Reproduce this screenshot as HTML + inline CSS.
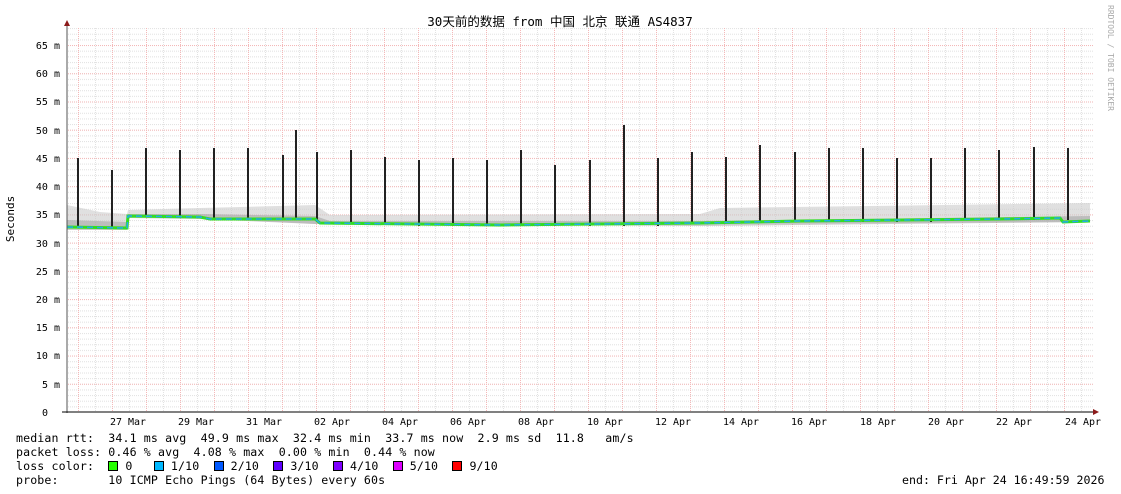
<!DOCTYPE html>
<html><head><meta charset="utf-8"><style>
body{margin:0;background:#fff;width:1121px;height:494px;overflow:hidden;position:relative;font-family:"DejaVu Sans Mono","Liberation Mono",monospace;}
pre{position:absolute;left:16px;top:431px;margin:0;font-family:"DejaVu Sans Mono","Liberation Mono",monospace;font-size:11.6px;line-height:14px;color:#000;letter-spacing:0.12px;}
.sq{display:inline-block;width:8px;height:8px;border:1px solid #000;vertical-align:-1px;}
</style></head><body>
<svg width="1121" height="494" style="position:absolute;left:0;top:0" font-family="DejaVu Sans Mono, Liberation Mono, monospace">
<defs>
<pattern id="hmin" x="0" y="412" width="10" height="5.646" patternUnits="userSpaceOnUse"><line x1="0" y1="0.5" x2="10" y2="0.5" stroke="#e2e2e2" stroke-width="1" stroke-dasharray="1,1"/></pattern>
<pattern id="hmaj" x="0" y="412" width="10" height="28.23" patternUnits="userSpaceOnUse"><line x1="0" y1="0.5" x2="10" y2="0.5" stroke="#f4b8b8" stroke-width="1" stroke-dasharray="1,1"/></pattern>
<pattern id="vmin" x="95" y="0" width="17" height="10" patternUnits="userSpaceOnUse"><line x1="0.5" y1="0" x2="0.5" y2="10" stroke="#e2e2e2" stroke-width="1" stroke-dasharray="1,1"/></pattern>
<pattern id="vmaj" x="78" y="0" width="34" height="10" patternUnits="userSpaceOnUse"><line x1="0.5" y1="0" x2="0.5" y2="10" stroke="#f4b8b8" stroke-width="1" stroke-dasharray="1,1"/></pattern>
</defs>
<rect x="67" y="27" width="1026" height="385" fill="url(#hmin)"/>
<rect x="67" y="27" width="1026" height="385" fill="url(#vmin)"/>
<rect x="67" y="27" width="1026" height="385" fill="url(#hmaj)"/>
<rect x="67" y="27" width="1026" height="385" fill="url(#vmaj)"/>
<g fill="#ccc" opacity="0.6">
<polygon points="67,205 100,212 127,214 128,210 200,208 315,205 330,215 700,214 720,208 1090,203 1090,222 700,224 315,224 200,218 128,217 127,228 67,228"/>
</g>
<g fill="#999" opacity="0.5">
<polygon points="67,220 127,222 128,214 200,214 315,216 330,221 700,221 1090,216 1090,222 700,226 315,224 200,219 128,218 127,230 67,230"/>
</g>
<g stroke="#222" stroke-width="2">
<line x1="78" y1="158" x2="78" y2="228"/><line x1="112" y1="170" x2="112" y2="229"/>
<line x1="146" y1="148" x2="146" y2="216"/><line x1="180" y1="150" x2="180" y2="216"/>
<line x1="214" y1="148" x2="214" y2="218"/><line x1="248" y1="148" x2="248" y2="220"/>
<line x1="283" y1="155" x2="283" y2="220"/><line x1="296" y1="130" x2="296" y2="220"/>
<line x1="317" y1="152" x2="317" y2="222"/><line x1="351" y1="150" x2="351" y2="224"/>
<line x1="385" y1="157" x2="385" y2="225"/><line x1="419" y1="160" x2="419" y2="226"/>
<line x1="453" y1="158" x2="453" y2="226"/><line x1="487" y1="160" x2="487" y2="226"/>
<line x1="521" y1="150" x2="521" y2="226"/><line x1="555" y1="165" x2="555" y2="226"/>
<line x1="590" y1="160" x2="590" y2="226"/><line x1="624" y1="125" x2="624" y2="226"/>
<line x1="658" y1="158" x2="658" y2="226"/><line x1="692" y1="152" x2="692" y2="224"/>
<line x1="726" y1="157" x2="726" y2="222"/><line x1="760" y1="145" x2="760" y2="222"/>
<line x1="795" y1="152" x2="795" y2="222"/><line x1="829" y1="148" x2="829" y2="222"/>
<line x1="863" y1="148" x2="863" y2="222"/><line x1="897" y1="158" x2="897" y2="222"/>
<line x1="931" y1="158" x2="931" y2="222"/><line x1="965" y1="148" x2="965" y2="220"/>
<line x1="999" y1="150" x2="999" y2="220"/><line x1="1034" y1="147" x2="1034" y2="220"/>
<line x1="1068" y1="148" x2="1068" y2="220"/>
</g>
<polyline fill="none" stroke="#33dd22" stroke-width="3" points="67,227 127,228 128,216 200,217 210,219 315,219 320,223 500,225 700,223 800,221 1000,219 1060,218 1063,222 1090,221"/>
<polyline fill="none" stroke="#22aaee" stroke-width="1.5" stroke-dasharray="6,4" points="67,227 127,228 128,216 200,217 210,219 315,219 320,223 500,225 700,223 800,221 1000,219 1060,218 1063,222 1090,221"/>
<line x1="67" y1="22" x2="67" y2="413" stroke="#555"/>
<line x1="62" y1="412" x2="1095" y2="412" stroke="#000"/>
<polygon points="64,26 70,26 67,20" fill="#8b1a1a"/>
<polygon points="1093,409 1093,415 1099,412" fill="#8b1a1a"/>
<g font-size="10" fill="#000" text-anchor="end">
<text x="60" y="49">65 m</text><text x="60" y="77">60 m</text><text x="60" y="105">55 m</text>
<text x="60" y="134">50 m</text><text x="60" y="162">45 m</text><text x="60" y="190">40 m</text>
<text x="60" y="218">35 m</text><text x="60" y="247">30 m</text><text x="60" y="275">25 m</text>
<text x="60" y="303">20 m</text><text x="60" y="331">15 m</text><text x="60" y="359">10 m</text>
<text x="60" y="388">5 m</text><text x="48" y="416">0</text>
</g>
<g font-size="10" fill="#000" text-anchor="middle">
<text x="128" y="425">27 Mar</text><text x="196" y="425">29 Mar</text><text x="264" y="425">31 Mar</text>
<text x="332" y="425">02 Apr</text><text x="400" y="425">04 Apr</text><text x="468" y="425">06 Apr</text>
<text x="536" y="425">08 Apr</text><text x="605" y="425">10 Apr</text><text x="673" y="425">12 Apr</text>
<text x="741" y="425">14 Apr</text><text x="809" y="425">16 Apr</text><text x="878" y="425">18 Apr</text>
<text x="946" y="425">20 Apr</text><text x="1014" y="425">22 Apr</text><text x="1083" y="425">24 Apr</text>
</g>
<text x="560" y="26" font-size="12.5" text-anchor="middle" font-family="DejaVu Sans Mono, Noto Sans CJK SC, monospace">30天前的数据 from 中国 北京 联通 AS4837</text>
<text transform="translate(14,219) rotate(-90)" font-size="11" text-anchor="middle">Seconds</text>
<text transform="translate(1108,5) rotate(90)" font-size="8" fill="#aaa">RRDTOOL / TOBI OETIKER</text>
</svg>
<pre>median rtt:  34.1 ms avg  49.9 ms max  32.4 ms min  33.7 ms now  2.9 ms sd  11.8   am/s
packet loss: 0.46 % avg  4.08 % max  0.00 % min  0.44 % now
loss color:  <span class="sq" style="background:#26ff00"></span> 0   <span class="sq" style="background:#00b8ff"></span> 1/10  <span class="sq" style="background:#0059ff"></span> 2/10  <span class="sq" style="background:#5e00ff"></span> 3/10  <span class="sq" style="background:#7e00ff"></span> 4/10  <span class="sq" style="background:#dd00ff"></span> 5/10  <span class="sq" style="background:#ff0000"></span> 9/10
probe:       10 ICMP Echo Pings (64 Bytes) every 60s</pre>
<pre style="left:902px;top:473px;letter-spacing:0">end: Fri Apr 24 16:49:59 2026</pre>
</body></html>
